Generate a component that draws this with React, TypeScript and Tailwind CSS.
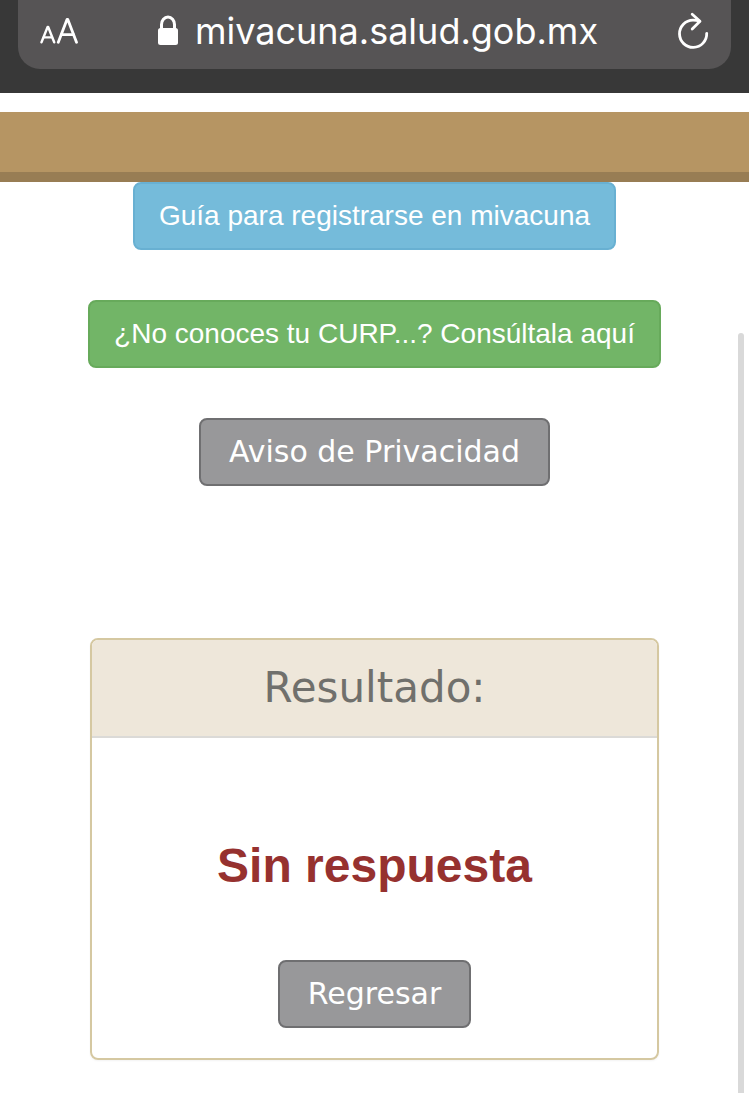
import clsx from "clsx";

const helvetica = "font-['Liberation_Sans',Arial,sans-serif]";
const inter = "font-[Inter,'Open_Sans',sans-serif]";
const wide = "font-['DejaVu_Sans',Verdana,sans-serif]";

const button =
  "inline-block rounded-lg border-2 py-3 text-center leading-10 text-white";
const grayButton = "border-[#6f6f71] bg-[#98989a] px-7 text-[30px]";

function LockIcon() {
  return (
    <svg width="22" height="32" viewBox="0 0 22 32" aria-hidden="true">
      <path
        d="M4.5 15V9.5a6.5 7.5 0 0 1 13 0V15"
        fill="none"
        stroke="white"
        strokeWidth="3"
      />
      <rect x="1" y="13" width="20" height="17" rx="2.5" fill="white" />
    </svg>
  );
}

function TextSizeIcon() {
  return (
    <svg
      width="38"
      height="28"
      viewBox="0 0 38 28"
      fill="none"
      stroke="white"
      strokeLinecap="round"
      strokeLinejoin="round"
      aria-hidden="true"
    >
      <g strokeWidth="2.4">
        <path d="M1.5 25.3 7.6 10h.6l6 15.3" />
        <path d="M3.8 20.4h8.1" />
      </g>
      <g strokeWidth="2.8">
        <path d="M18.3 25.3 27 2.4h.8l8.7 22.9" />
        <path d="M21.4 17.6h12" />
      </g>
    </svg>
  );
}

function ReloadIcon() {
  return (
    <svg
      width="32"
      height="40"
      viewBox="0 0 32 40"
      fill="none"
      stroke="white"
      strokeWidth="2.8"
      strokeLinecap="round"
      strokeLinejoin="round"
      aria-hidden="true"
    >
      <path d="M22.4 10.2C20.4 9.5 18.4 9.2 16 9.2A13.6 13.6 0 1 0 29.7 22.3" />
      <path d="M15.2 3.2 23 10.3 15.2 18" />
    </svg>
  );
}

function AddressBar() {
  return (
    <header className="bg-[#383838] px-[18px] pb-6">
      <div className="flex h-[69px] items-center justify-between rounded-b-[22px] bg-[#565455] px-[22px] pb-2">
        <button type="button" aria-label="Tamaño de texto">
          <TextSizeIcon />
        </button>
        <div className="flex items-center gap-4">
          <LockIcon />
          <span className={clsx(inter, "text-[36px] leading-10 text-white")}>
            mivacuna.salud.gob.mx
          </span>
        </div>
        <button type="button" aria-label="Recargar">
          <ReloadIcon />
        </button>
      </div>
    </header>
  );
}

export default function App() {
  return (
    <div className={clsx(helvetica, "relative min-h-screen overflow-hidden bg-white")}>
      <AddressBar />
      <div className="mt-[19px] h-[70px] border-b-10 border-[#987d54] bg-[#b69563]" />

      <main className="pb-8">
        <nav className="flex flex-col items-center gap-[50px]">
          <a
            href="#guia"
            className={clsx(button, "border-[#68b0d2] bg-[#75bbda] px-6 text-[28px]")}
          >
            Guía para registrarse en mivacuna
          </a>
          <a
            href="#curp"
            className={clsx(button, "border-[#67aa5b] bg-[#72b567] px-6 text-[28px]")}
          >
            ¿No conoces tu CURP...? Consúltala aquí
          </a>
          <a href="#privacidad" className={clsx(button, grayButton, wide)}>
            Aviso de Privacidad
          </a>
        </nav>

        <section className="mx-[90px] mt-[152px] overflow-hidden rounded-lg border-2 border-[#d5c8a1] shadow-xs">
          <h2
            className={clsx(
              wide,
              "border-b-2 border-[#dbdad7] bg-[#eee7da] py-6 text-center text-[42px] leading-12 text-[#70706c]",
            )}
          >
            Resultado:
          </h2>
          <div className="flex flex-col items-center gap-[66px] pt-25 pb-[30px]">
            <p className="text-center text-[48px] leading-14 font-bold text-[#96312f]">
              Sin respuesta
            </p>
            <button type="button" className={clsx(button, grayButton, wide)}>
              Regresar
            </button>
          </div>
        </section>
      </main>

      {/* scroll indicator */}
      <div className="absolute top-[333px] right-[5px] bottom-0 w-1.5 rounded-t-full bg-[#d9d9d9]" />
    </div>
  );
}
